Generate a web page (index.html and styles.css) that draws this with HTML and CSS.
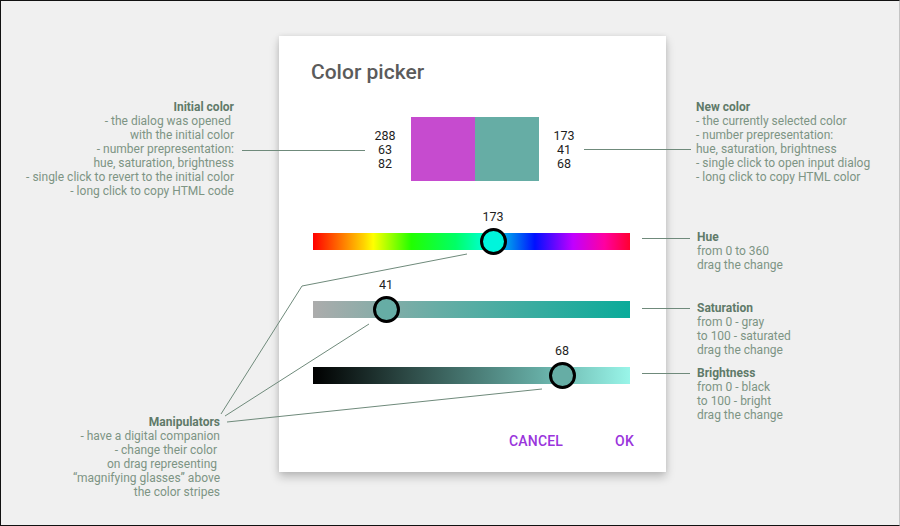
FILE: index.html
```html
<!DOCTYPE html>
<html lang="en">
<head>
<meta charset="utf-8">
<title>Color picker</title>
<link rel="stylesheet" href="styles.css">
</head>
<body>
<div class="page">
  <div class="col-left">
    <div class="note note-initial">
      <div class="note-title">Initial color</div>
      <div>- the dialog was opened&nbsp;</div>
      <div>with the initial color</div>
      <div>- number prepresentation:</div>
      <div>hue, saturation, brightness</div>
      <div>- single click to revert to the initial color</div>
      <div>- long click to copy HTML code</div>
    </div>
    <div class="note note-manip">
      <div class="note-title">Manipulators</div>
      <div>- have a digital companion</div>
      <div>- change their color&nbsp;</div>
      <div>on drag representing&nbsp;</div>
      <div>“magnifying glasses” above</div>
      <div>the color stripes</div>
    </div>
  </div>

  <div class="dialog">
    <h1 class="title">Color picker</h1>
    <div class="swatch-row">
      <div class="nums"><span>288</span><span>63</span><span>82</span></div>
      <div class="swatch swatch-initial"></div>
      <div class="swatch swatch-new"></div>
      <div class="nums nums-new"><span>173</span><span>41</span><span>68</span></div>
    </div>

    <div class="slider">
      <div class="track track-hue"></div>
      <div class="knob knob-hue" style="left:180px"><span class="knob-value">173</span></div>
    </div>
    <div class="slider slider-sat">
      <div class="track track-sat"></div>
      <div class="knob knob-color" style="left:73px"><span class="knob-value">41</span></div>
    </div>
    <div class="slider slider-bri">
      <div class="track track-bri"></div>
      <div class="knob knob-color" style="left:249px"><span class="knob-value">68</span></div>
    </div>

    <div class="actions">
      <button class="btn" type="button">CANCEL</button>
      <button class="btn" type="button">OK</button>
    </div>
  </div>

  <div class="col-right">
    <div class="note note-new">
      <div class="note-title">New color</div>
      <div>- the currently selected color</div>
      <div>- number prepresentation:</div>
      <div>hue, saturation, brightness</div>
      <div>- single click to open input dialog</div>
      <div>- long click to copy HTML color</div>
    </div>
    <div class="note note-hue">
      <div class="note-title">Hue</div>
      <div>from 0 to 360</div>
      <div>drag the change</div>
    </div>
    <div class="note note-sat">
      <div class="note-title">Saturation</div>
      <div>from 0 - gray</div>
      <div>to 100 - saturated</div>
      <div>drag the change</div>
    </div>
    <div class="note note-bri">
      <div class="note-title">Brightness</div>
      <div>from 0 - black</div>
      <div>to 100 - bright</div>
      <div>drag the change</div>
    </div>
  </div>

  <svg class="connectors" width="900" height="526" viewBox="0 0 900 526" aria-hidden="true">
    <g fill="none" stroke="#6f8a7b" stroke-width="1">
      <line x1="242" y1="150.5" x2="365" y2="150.5"/>
      <line x1="584" y1="149.5" x2="691" y2="149.5"/>
      <line x1="642" y1="238.5" x2="690" y2="238.5"/>
      <line x1="642" y1="308.5" x2="690" y2="308.5"/>
      <line x1="642" y1="373.5" x2="690" y2="373.5"/>
      <polyline points="221,414 302,286 467,254"/>
      <line x1="225" y1="416" x2="369" y2="324"/>
      <line x1="227" y1="422" x2="542" y2="389"/>
    </g>
  </svg>
</div>
</body>
</html>
```

FILE: styles.css
```css
* {
  box-sizing: border-box;
}

html, body {
  margin: 0;
  padding: 0;
}

body {
  font-family: Roboto, "Noto Sans", "Liberation Sans", sans-serif;
  background: #f0f0f0;
}

.page {
  position: relative;
  width: 900px;
  height: 526px;
  background: #f0f0f0;
  border: 1px solid #111;
  border-right-color: #c4c4c4;
  display: flex;
  align-items: flex-start;
  overflow: hidden;
}

/* annotation notes */
.note {
  font-size: 12px;
  line-height: 14px;
  color: #7d9484;
  white-space: nowrap;
}

.note-title {
  font-weight: 700;
  color: #5f7a69;
}

.col-left {
  width: 235px;
  flex: none;
  padding-top: 99px;
  padding-right: 2px;
  display: flex;
  flex-direction: column;
  align-items: flex-end;
  text-align: right;
}

.note-manip {
  margin-top: 217px;
  margin-right: 14px;
}

.col-right {
  flex: none;
  margin-left: 30px;
  padding-top: 99px;
  display: flex;
  flex-direction: column;
}

.note-hue {
  margin-top: 46px;
  margin-left: 1px;
}

.note-sat {
  margin-top: 29px;
  margin-left: 1px;
}

.note-bri {
  margin-top: 9px;
  margin-left: 1px;
}

/* dialog */
.dialog {
  flex: none;
  margin-left: 43px;
  margin-top: 35px;
  width: 387px;
  height: 436px;
  background: #fff;
  padding: 23px 32px 0 32px;
  box-shadow: 0 5px 9px rgba(0, 0, 0, 0.22), 0 0 5px rgba(0, 0, 0, 0.08);
  display: flex;
  flex-direction: column;
}

.title {
  margin: 0;
  font-size: 21px;
  line-height: 26px;
  font-weight: 500;
  color: #5b5b5b;
}

.swatch-row {
  margin-top: 32px;
  margin-left: 54px;
  display: flex;
  align-items: center;
}

.nums {
  width: 40px;
  display: flex;
  flex-direction: column;
  align-items: center;
  font-size: 12.5px;
  line-height: 14px;
  color: #1e1e1e;
  padding-top: 2px;
  margin-right: 6px;
}

.nums-new {
  margin-right: 0;
  margin-left: 5px;
}

.swatch {
  width: 64px;
  height: 64px;
}

.swatch-initial {
  background: #c64bcf;
}

.swatch-new {
  background: #66ada5;
}

/* sliders */
.slider {
  position: relative;
  margin-top: 28px;
  margin-left: 2px;
  width: 317px;
  padding-top: 24px;
}

.slider-sat {
  margin-top: 27px;
}

.slider-bri {
  margin-top: 25px;
}

.track {
  height: 17px;
}

.track-hue {
  background: linear-gradient(to right,
    #ff0000 0%,
    #ffd200 16%,
    #ffff00 19%,
    #22ff00 31%,
    #00ff66 45%,
    #00ffd0 54%,
    #0090ee 62%,
    #0010ff 70%,
    #c000ff 82%,
    #ff00a0 92%,
    #ff0030 100%);
}

.track-sat {
  background: linear-gradient(to right, #acacac, #66ada5 40%, #0aab9a);
}

.track-bri {
  background: linear-gradient(to right, #000000, #2d4a46 30%, #66ada5 72%, #99f5e9);
}

.knob {
  position: absolute;
  top: 19px;
  width: 27px;
  height: 27px;
  margin-left: -13.5px;
  border: 3px solid #000;
  border-radius: 50%;
}

.knob-hue {
  background: #00f5dc;
}

.knob-color {
  background: #66ada5;
}

.knob-value {
  position: absolute;
  left: 50%;
  bottom: calc(100% + 7px);
  transform: translateX(-50%);
  font-size: 12.5px;
  line-height: 14px;
  color: #1e1e1e;
}

/* actions */
.actions {
  margin-top: 49px;
  display: flex;
  justify-content: flex-end;
  gap: 52px;
}

.btn {
  border: 0;
  background: none;
  padding: 0;
  font-family: Roboto, "Noto Sans", "Liberation Sans", sans-serif;
  font-size: 14px;
  line-height: 16px;
  font-weight: 500;
  color: #9a35dc;
  letter-spacing: 0.2px;
}

/* connector lines overlay */
.connectors {
  position: absolute;
  left: -1px;
  top: -1px;
  pointer-events: none;
}
```
